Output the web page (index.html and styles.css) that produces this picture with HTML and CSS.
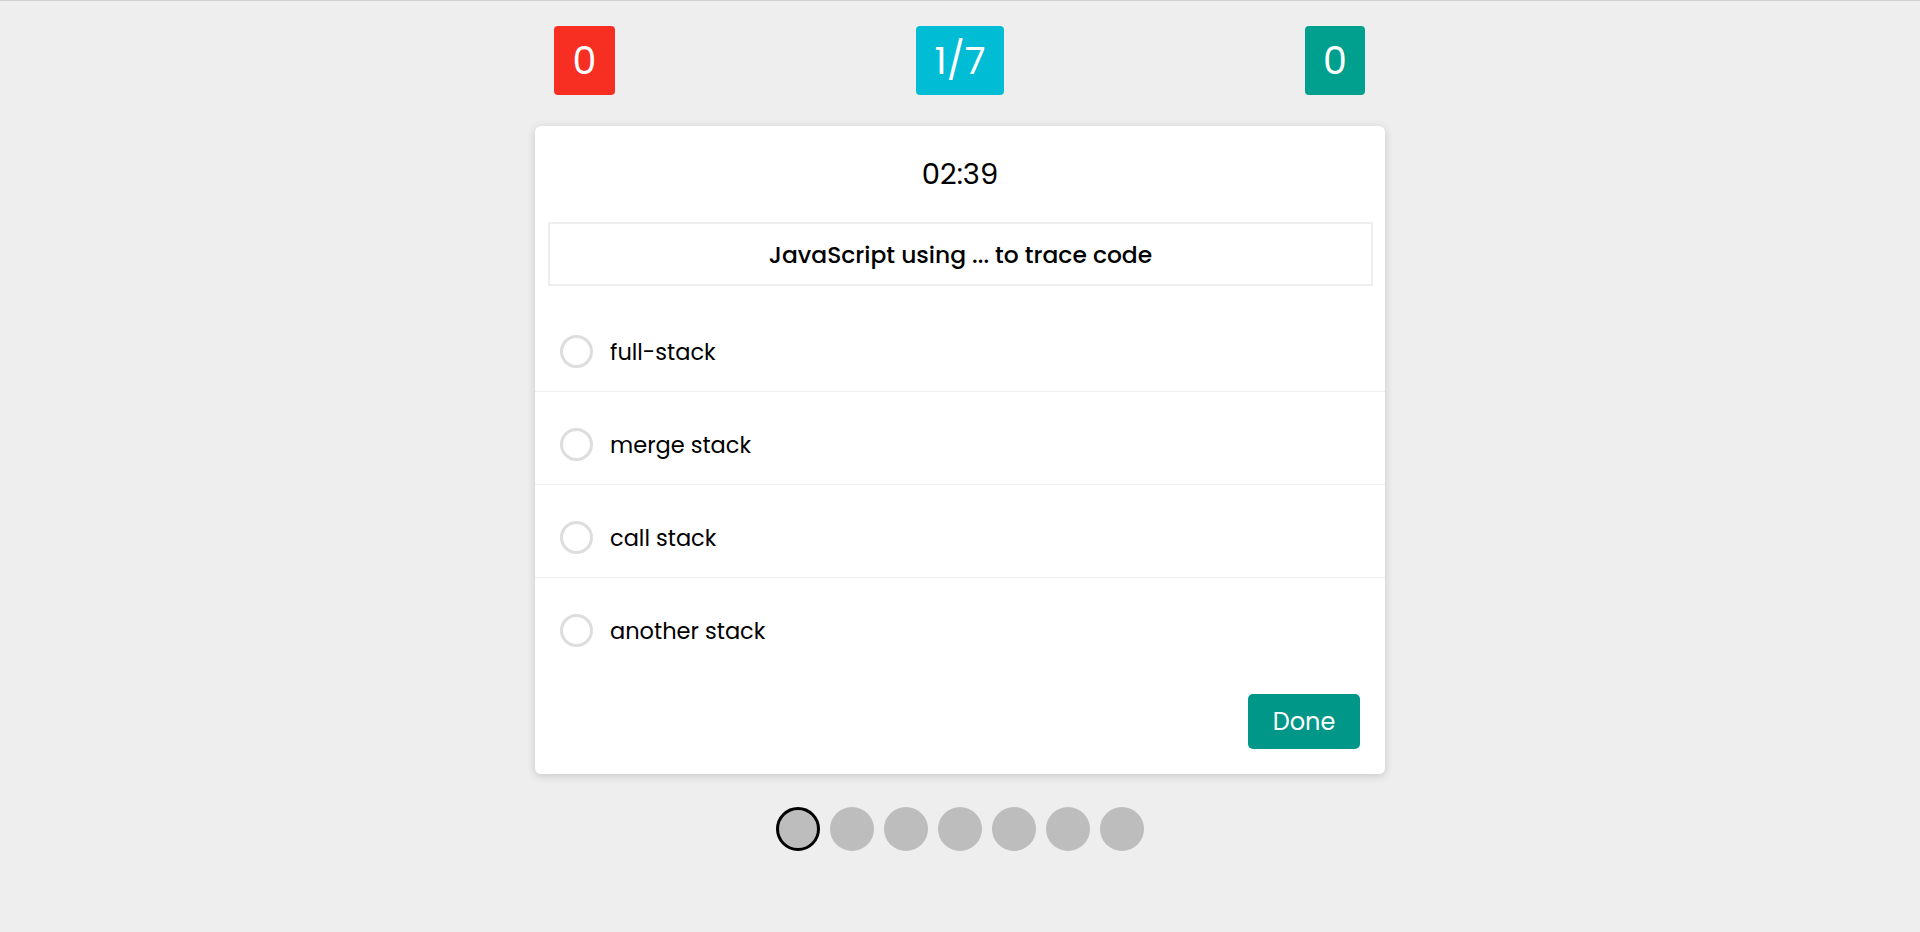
FILE: index.html
```html
<!DOCTYPE html>
<html lang="en">
<head>
<meta charset="utf-8">
<title>Quiz</title>
<link rel="stylesheet" href="styles.css">
</head>
<body>
<div class="page">
  <div class="scores">
    <div class="badge badge-wrong">0</div>
    <div class="badge badge-count">1/7</div>
    <div class="badge badge-right">0</div>
  </div>
  <div class="card">
    <div class="timer">02:39</div>
    <div class="question">JavaScript using ... to trace code</div>
    <ul class="options">
      <li class="option"><span class="radio"></span><span class="label">full-stack</span></li>
      <li class="option"><span class="radio"></span><span class="label">merge stack</span></li>
      <li class="option"><span class="radio"></span><span class="label">call stack</span></li>
      <li class="option"><span class="radio"></span><span class="label">another stack</span></li>
    </ul>
    <div class="actions"><button class="done">Done</button></div>
  </div>
  <div class="dots">
    <span class="dot active"></span>
    <span class="dot"></span>
    <span class="dot"></span>
    <span class="dot"></span>
    <span class="dot"></span>
    <span class="dot"></span>
    <span class="dot"></span>
  </div>
</div>
</body>
</html>
```
FILE: styles.css
```css
* { box-sizing: border-box; }
html, body { margin: 0; padding: 0; }
body {
  background: #eeeeee;
  font-family: "Poppins", "Open Sans", "DejaVu Sans", sans-serif;
  color: #000;
  border-top: 1px solid #cfcfcf;
  min-height: 932px;
}
.page {
  width: 850px;
  margin: 0 auto;
  display: flex;
  flex-direction: column;
  align-items: stretch;
}
.scores {
  display: flex;
  justify-content: space-between;
  padding: 0 20px 0 19px;
  margin-top: 25px;
}
.badge {
  height: 69px;
  padding: 0 10px;
  border-radius: 4px;
  color: #fff;
  font-size: 38px;
  font-weight: 400;
  display: flex;
  align-items: center;
  justify-content: center;
  min-width: 61px;
}
.badge-wrong { background: #f62f22; }
.badge-count { background: #00bcd4; width: 88px; }
.badge-right { background: #009f8e; width: 60px; min-width: 60px; }
.card {
  margin-top: 31px;
  background: #fff;
  border-radius: 6px;
  box-shadow: 0 2px 8px rgba(0, 0, 0, 0.16);
  padding-bottom: 25px;
}
.timer {
  text-align: center;
  font-size: 29px;
  line-height: 48px;
  padding: 24px 0 24px;
}
.question {
  margin: 0 12px 0 13px;
  border: 2px solid #eeeeee;
  height: 64px;
  display: flex;
  align-items: center;
  justify-content: center;
  font-size: 23.4px;
  font-weight: 500;
}
.options {
  list-style: none;
  margin: 13px 0 0;
  padding: 0;
}
.option {
  display: flex;
  align-items: center;
  gap: 17px;
  height: 93px;
  padding: 13px 25px 0;
  border-bottom: 1px solid #eeeeee;
  font-size: 22.5px;
}
.option:last-child {
  border-bottom: none;
  height: 92px;
}
.radio {
  width: 33px;
  height: 33px;
  border: 3px solid #dddddd;
  border-radius: 50%;
  flex: none;
}
.actions {
  display: flex;
  justify-content: flex-end;
  padding: 24px 25px 0;
}
.done {
  background: #009688;
  color: #fff;
  border: none;
  border-radius: 5px;
  width: 112px;
  height: 55px;
  font-family: inherit;
  font-size: 24px;
  cursor: pointer;
}
.dots {
  display: flex;
  justify-content: center;
  gap: 10px;
  margin-top: 33px;
}
.dot {
  width: 44px;
  height: 44px;
  border-radius: 50%;
  background: #bdbdbd;
}
.dot.active {
  border: 3px solid #000;
}
```
